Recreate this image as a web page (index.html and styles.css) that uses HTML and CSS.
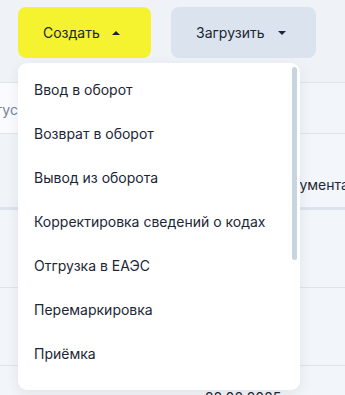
FILE: index.html
```html
<!DOCTYPE html>
<html lang="ru">
<head>
<meta charset="utf-8">
<link rel="stylesheet" href="styles.css">
</head>
<body>
<div class="page">
  <div class="toolbar">
    <button class="btn btn-create">Создать <span class="caret caret-up"></span></button>
    <button class="btn btn-upload">Загрузить <span class="caret caret-down"></span></button>
  </div>
  <div class="table">
    <div class="filter-row">
      <div class="filter-input"><span class="filter-text">Статус</span></div>
    </div>
    <div class="head-row">
      <div class="head-cell">Тип документа</div>
    </div>
    <div class="row"></div>
    <div class="row"></div>
    <div class="row row-last"><span class="date">28.08.2025</span></div>
  </div>

  <div class="dropdown">
    <ul class="menu">
      <li class="menu-item">Ввод в оборот</li>
      <li class="menu-item">Возврат в оборот</li>
      <li class="menu-item">Вывод из оборота</li>
      <li class="menu-item">Корректировка сведений о кодах</li>
      <li class="menu-item">Отгрузка в ЕАЭС</li>
      <li class="menu-item">Перемаркировка</li>
      <li class="menu-item">Приёмка</li>
    </ul>
    <div class="scrollbar"></div>
  </div>
</div>
</body>
</html>
```

FILE: styles.css
```css
* { box-sizing: border-box; }
html, body { margin: 0; padding: 0; }
body {
  width: 345px;
  height: 395px;
  overflow: hidden;
  background: #eff3f8;
  font-family: Inter, "Noto Sans", "Liberation Sans", sans-serif;
  font-size: 14px;
  color: #1c2636;
}
.page { position: relative; width: 345px; height: 395px; overflow: hidden; }

.toolbar {
  display: flex;
  gap: 20px;
  padding: 7px 0 0 18px;
}
.btn {
  display: flex;
  align-items: center;
  height: 51px;
  border: none;
  border-radius: 8px;
  font-family: inherit;
  font-size: 14px;
  color: #1c2636;
  padding: 0 0 0 25px;
  gap: 12px;
}
.btn-create { width: 133px; background: #f5f22f; }
.btn-upload { width: 145px; background: #dbe4ee; gap: 14px; }
.caret {
  width: 0; height: 0;
  border-left: 4px solid transparent;
  border-right: 4px solid transparent;
}
.caret-up { border-bottom: 4px solid #1c2636; }
.caret-down { border-top: 4px solid #1c2636; }

.table {
  margin-top: 24px;
  border-top: 1px solid #dde4ec;
}
.filter-row {
  height: 51px;
  border-bottom: 1px solid #dde4ec;
  background: linear-gradient(90deg, #fafbfd 0, #fafbfd 60px, #f2f5f9 300px);
}
.filter-input {
  width: 120px;
  height: 100%;
  overflow: hidden;
  display: flex;
  align-items: center;
  padding-top: 2px;
}
.filter-text {
  margin-left: -29px;
  color: #76849a;
  font-size: 14px;
}
.head-row {
  height: 76px;
  border-bottom: 3px solid #dce4ed;
  display: flex;
  align-items: flex-end;
  padding-bottom: 14px;
  background: linear-gradient(90deg, #f0f4f8 0, #f3f6fa 100%);
}
.head-cell {
  margin-left: 246px;
  white-space: nowrap;
  color: #1c2636;
}
.row {
  height: 78px;
  border-bottom: 1px solid #dde4ec;
  background: #f2f5f9;
}
.row-last {
  height: 80px;
  border-bottom: none;
}
.date {
  display: block;
  padding: 23px 0 0 205px;
  color: #1c2636;
}

.dropdown {
  position: absolute;
  left: 18px;
  top: 63px;
  width: 282px;
  height: 327px;
  background: #ffffff;
  border-radius: 9px;
  box-shadow: 0 4px 14px rgba(30, 50, 80, 0.08);
}
.menu {
  list-style: none;
  margin: 0;
  padding: 4px 0 0 0;
}
.menu-item {
  height: 44px;
  display: flex;
  align-items: center;
  padding-left: 16px;
  color: #1c2636;
  white-space: nowrap;
}
.scrollbar {
  position: absolute;
  right: 3px;
  top: 4px;
  width: 5px;
  height: 193px;
  border-radius: 3px;
  background: #c8d5e1;
}
```
